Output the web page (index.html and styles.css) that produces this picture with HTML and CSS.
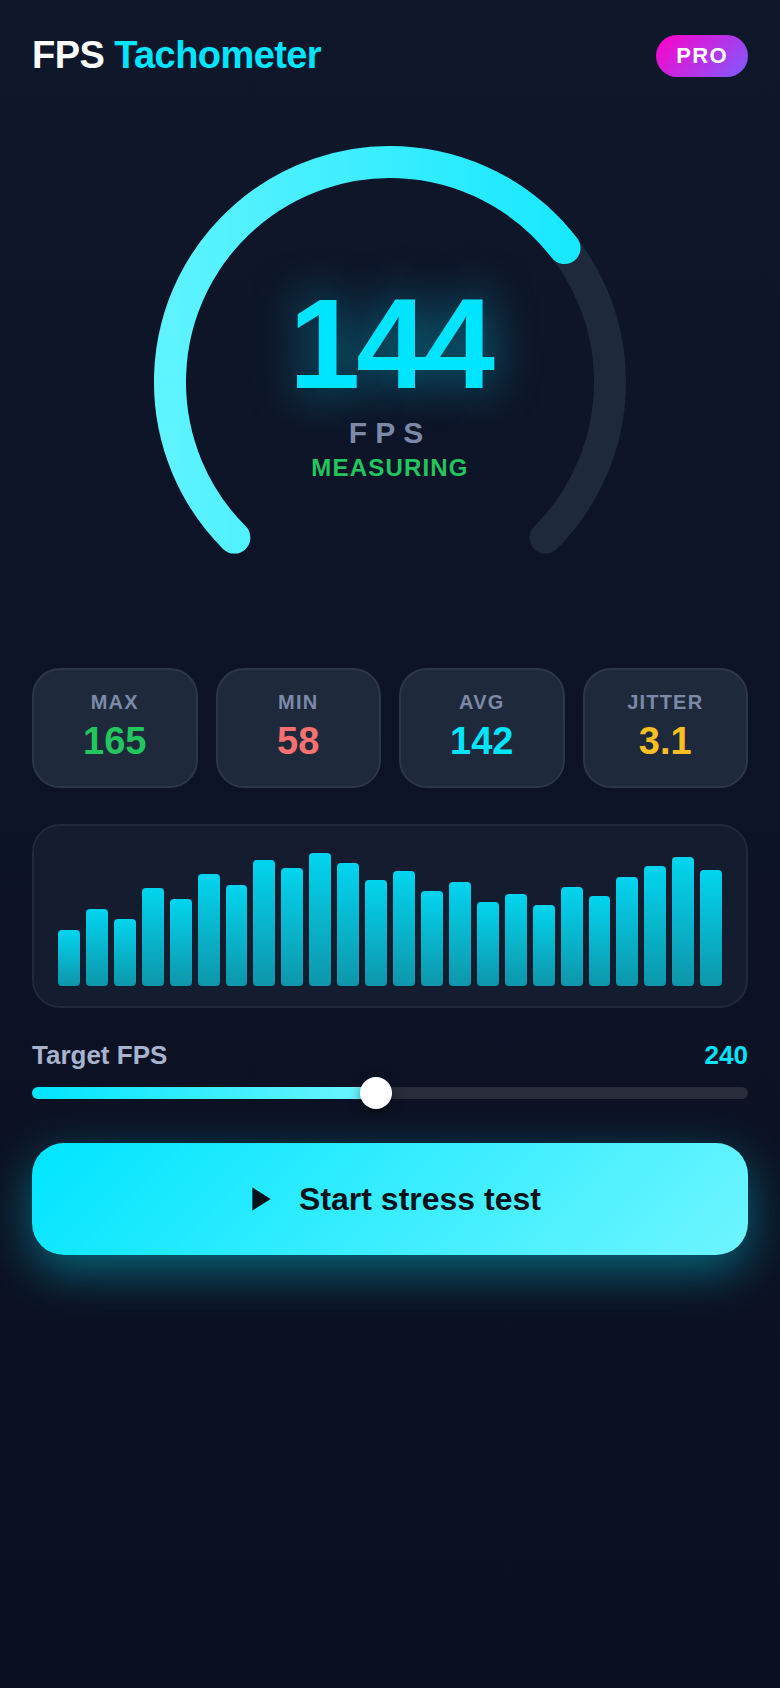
FILE: index.html
```html
<!DOCTYPE html>
<html lang="en">
<head>
	<meta charset="utf-8">
	<meta name="viewport" content="width=device-width, initial-scale=1">
	<title>FPS Tachometer</title>
	<link rel="stylesheet" href="styles.css">
</head>
<body>
<div class="app">
	<header class="head">
		<h1>FPS <span>Tachometer</span></h1>
		<div class="badge">PRO</div>
	</header>

	<div class="gauge">
		<svg viewBox="0 0 520 520" aria-hidden="true">
			<defs>
				<linearGradient id="arc" gradientUnits="userSpaceOnUse" x1="571" y1="0" x2="-51" y2="0">
					<stop offset="0" stop-color="#00e5ff"/>
					<stop offset="1" stop-color="#6ef5ff"/>
				</linearGradient>
			</defs>
			<path class="track" d="M104.4 415.6A220 220 0 1 1 415.6 415.6"/>
			<path class="value" d="M104.4 415.6A220 220 0 1 1 434.5 126.1"/>
		</svg>
		<div class="readout">
			<div class="number">144</div>
			<div class="unit">FPS</div>
			<div class="status">MEASURING</div>
		</div>
	</div>

	<div class="stats">
		<div class="stat"><div class="name">MAX</div><div class="num green">165</div></div>
		<div class="stat"><div class="name">MIN</div><div class="num red">58</div></div>
		<div class="stat"><div class="name">AVG</div><div class="num cyan">142</div></div>
		<div class="stat"><div class="name">JITTER</div><div class="num amber">3.1</div></div>
	</div>

	<div class="chart">
		<div class="bars" id="bars"></div>
	</div>

	<div class="target">
		<div class="row">
			<label for="fps">Target FPS</label>
			<output id="out" for="fps">240</output>
		</div>
		<input type="range" id="fps" min="0" max="500" value="240">
	</div>

	<button type="button" class="start">
		<svg viewBox="0 0 24 24" aria-hidden="true"><path d="M8 5v14l11-7z"/></svg>
		<span>Start stress test</span>
	</button>
</div>

<script type="text/javascript">
	var data=[40,55,48,70,62,80,72,90,84,95,88,76,82,68,74,60,66,58,71,64,78,86,92,83];
	var bars=document.getElementById('bars');
	var fps=document.getElementById('fps');
	var out=document.getElementById('out');

	for(var i=0;i<data.length;i++){
		var bar=document.createElement('div');
		bar.className='bar';
		bar.style.height=data[i]+'%';
		bars.appendChild(bar);
	}

	function update(){
		out.value=fps.value;
		fps.style.setProperty('--fill',fps.value/fps.max*100+'%');
	}
	fps.oninput=update;
	update();
</script>
</body>
</html>
```
FILE: styles.css
```css
*{
	box-sizing: border-box;
}
body{
	margin: 0;
	min-height: 100vh;
	background: linear-gradient(180deg, #0f172a 0%, #0d1326 50%, #0a101f 100%);
	font-family: "Liberation Sans", Arial, sans-serif;
	font-weight: bold;
	color: #fff;
}
.app{
	padding: 35px 32px;
}
.head{
	display: flex;
	justify-content: space-between;
	align-items: flex-start;
}
.head h1{
	margin: 0;
	font-size: 38px;
	line-height: 40px;
	letter-spacing: -0.015em;
}
.head h1 span{
	color: #00e5ff;
}
.badge{
	padding: 8px 20px;
	border-radius: 21px;
	background: linear-gradient(135deg, #ff00c8, #7c5cff);
	font-size: 22px;
	line-height: 26px;
	letter-spacing: 0.06em;
}

/* gauge */
.gauge{
	display: grid;
	place-items: center;
	max-width: 520px;
	margin: 45px auto 26px;
}
.gauge svg,
.readout{
	grid-area: 1 / 1;
}
.gauge svg{
	display: block;
	width: 100%;
}
.gauge path{
	fill: none;
	stroke-width: 32;
	stroke-linecap: round;
}
.track{
	stroke: #1e293b;
}
.value{
	stroke: url(#arc);
}
.readout{
	padding-bottom: 2px;
	text-align: center;
}
.number{
	font-size: 128px;
	line-height: 128px;
	letter-spacing: -0.03em;
	color: #00e5ff;
	text-shadow: 0 0 48px rgba(0,229,255,0.5);
}
.unit{
	margin-top: 8px;
	font-size: 30px;
	line-height: 34px;
	letter-spacing: 8px;
	color: #7c8aa8;
}
.status{
	margin-top: 4px;
	font-size: 24px;
	line-height: 28px;
	letter-spacing: 0.05em;
	color: #22c55e;
}

/* stats */
.stats{
	display: grid;
	grid-template-columns: repeat(4, 1fr);
	gap: 18px;
}
.stat{
	padding: 21px 8px 23px;
	border: 2px solid #2d3748;
	border-radius: 28px;
	background: #1e293b;
	text-align: center;
}
.name{
	font-size: 20px;
	line-height: 22px;
	letter-spacing: 0.06em;
	color: #7c8aa8;
}
.num{
	margin-top: 6px;
	font-size: 38px;
	line-height: 44px;
}
.green{
	color: #22c55e;
}
.red{
	color: #f87171;
}
.cyan{
	color: #00e5ff;
}
.amber{
	color: #fbbf24;
}

/* chart */
.chart{
	margin-top: 36px;
	padding: 20px 24px;
	border: 2px solid #212a3c;
	border-radius: 28px;
	background: #141c2f;
}
.bars{
	display: flex;
	align-items: flex-end;
	gap: 6px;
	height: 140px;
}
.bar{
	flex: 1;
	border-radius: 4px;
	background: linear-gradient(180deg, #02d5ef, #0e96aa);
}

/* target slider */
.target{
	margin-top: 32px;
}
.row{
	display: flex;
	justify-content: space-between;
	font-size: 26px;
	line-height: 30px;
}
.row label{
	color: #a8b3cf;
}
.row output{
	color: #00e5ff;
}
.target input{
	-webkit-appearance: none;
	appearance: none;
	display: block;
	width: 100%;
	height: 32px;
	margin: 7px 0 0;
	background: none;
	cursor: pointer;
}
.target input::-webkit-slider-runnable-track{
	height: 12px;
	border-radius: 6px;
	background: linear-gradient(90deg, #00e5ff, #6ef5ff) 0 0 / var(--fill) 100% no-repeat #292d3b;
}
.target input::-webkit-slider-thumb{
	-webkit-appearance: none;
	width: 32px;
	height: 32px;
	margin-top: -10px;
	border-radius: 50%;
	background: #fff;
	box-shadow: 0 4px 12px rgba(0,0,0,0.4);
}

.start{
	display: flex;
	justify-content: center;
	align-items: center;
	gap: 20px;
	width: 100%;
	margin-top: 34px;
	padding: 36px;
	border: 0;
	border-radius: 32px;
	background: linear-gradient(135deg, #00e5ff, #6ef5ff);
	box-shadow: 0 16px 48px rgba(0,229,255,0.4);
	color: #03121a;
	font: inherit;
	font-size: 32px;
	line-height: 40px;
	cursor: pointer;
}
.start svg{
	width: 40px;
	height: 40px;
	fill: currentColor;
}
```
